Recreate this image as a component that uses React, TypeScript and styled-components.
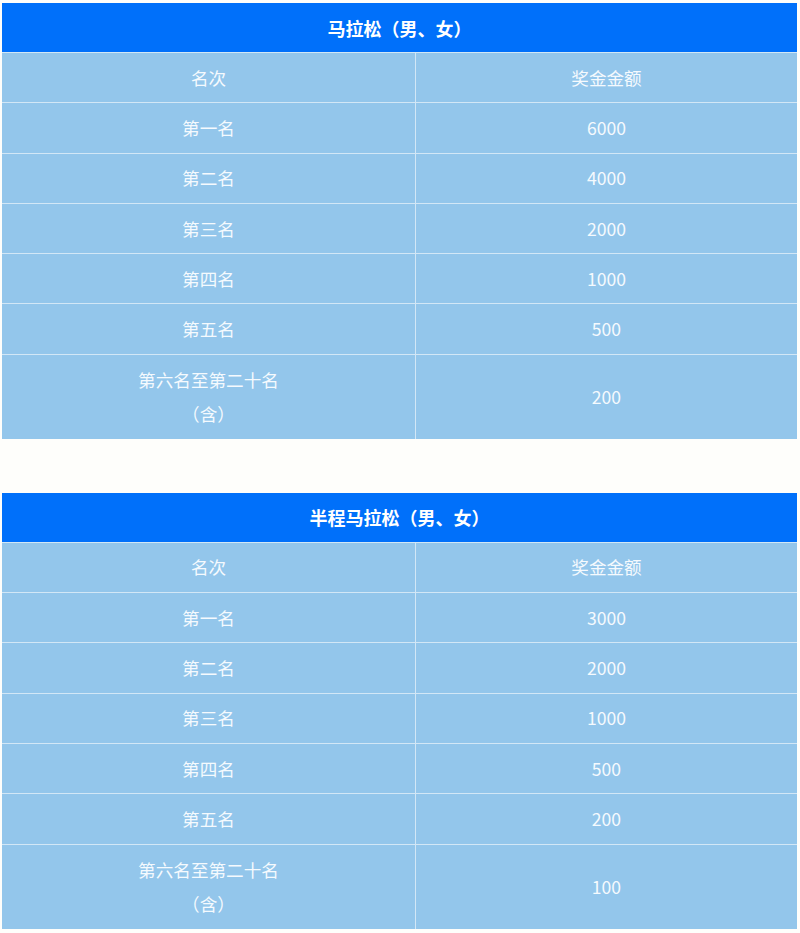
import React from "react";
import styled, { createGlobalStyle } from "styled-components";

const Global = createGlobalStyle`
  html, body { margin: 0; padding: 0; background: #fefefb; }
  body { font-family: "Noto Sans CJK SC", "Noto Sans", sans-serif; }
`;

const Page = styled.div`
  display: flex;
  flex-direction: column;
  gap: 54px;
  padding: 3px 3px 0 2px;
`;

const Table = styled.div`
  display: grid;
  grid-template-columns: 413px 1fr;
  gap: 1px;
  background: #d2e7f6;
`;

const Title = styled.div`
  grid-column: 1 / span 2;
  height: 49px;
  display: flex;
  align-items: center;
  justify-content: center;
  background: #0070fa;
  color: #ffffff;
  font-size: 18px;
  font-weight: 700;
`;

const Cell = styled.div<{ $tall?: boolean }>`
  height: ${(p) => (p.$tall ? "84px" : "49.3px")};
  display: flex;
  flex-direction: column;
  align-items: center;
  justify-content: center;
  background: #93c6eb;
  color: #f5fafe;
  font-size: 17.6px;
  line-height: 34px;
  text-align: center;
`;

type Row = { rank: string[]; amount: string };

const rowsA: Row[] = [
  { rank: ["名次"], amount: "奖金金额" },
  { rank: ["第一名"], amount: "6000" },
  { rank: ["第二名"], amount: "4000" },
  { rank: ["第三名"], amount: "2000" },
  { rank: ["第四名"], amount: "1000" },
  { rank: ["第五名"], amount: "500" },
  { rank: ["第六名至第二十名", "（含）"], amount: "200" },
];

const rowsB: Row[] = [
  { rank: ["名次"], amount: "奖金金额" },
  { rank: ["第一名"], amount: "3000" },
  { rank: ["第二名"], amount: "2000" },
  { rank: ["第三名"], amount: "1000" },
  { rank: ["第四名"], amount: "500" },
  { rank: ["第五名"], amount: "200" },
  { rank: ["第六名至第二十名", "（含）"], amount: "100" },
];

function Prize({ title, rows }: { title: string; rows: Row[] }) {
  return (
    <Table>
      <Title>{title}</Title>
      {rows.map((r, i) => {
        const tall = r.rank.length > 1;
        return (
          <React.Fragment key={i}>
            <Cell $tall={tall}>
              {r.rank.map((l, j) => (
                <span key={j}>{l}</span>
              ))}
            </Cell>
            <Cell $tall={tall}>{r.amount}</Cell>
          </React.Fragment>
        );
      })}
    </Table>
  );
}

export default function App() {
  return (
    <>
      <Global />
      <Page>
        <Prize title="马拉松（男、女）" rows={rowsA} />
        <Prize title="半程马拉松（男、女）" rows={rowsB} />
      </Page>
    </>
  );
}
